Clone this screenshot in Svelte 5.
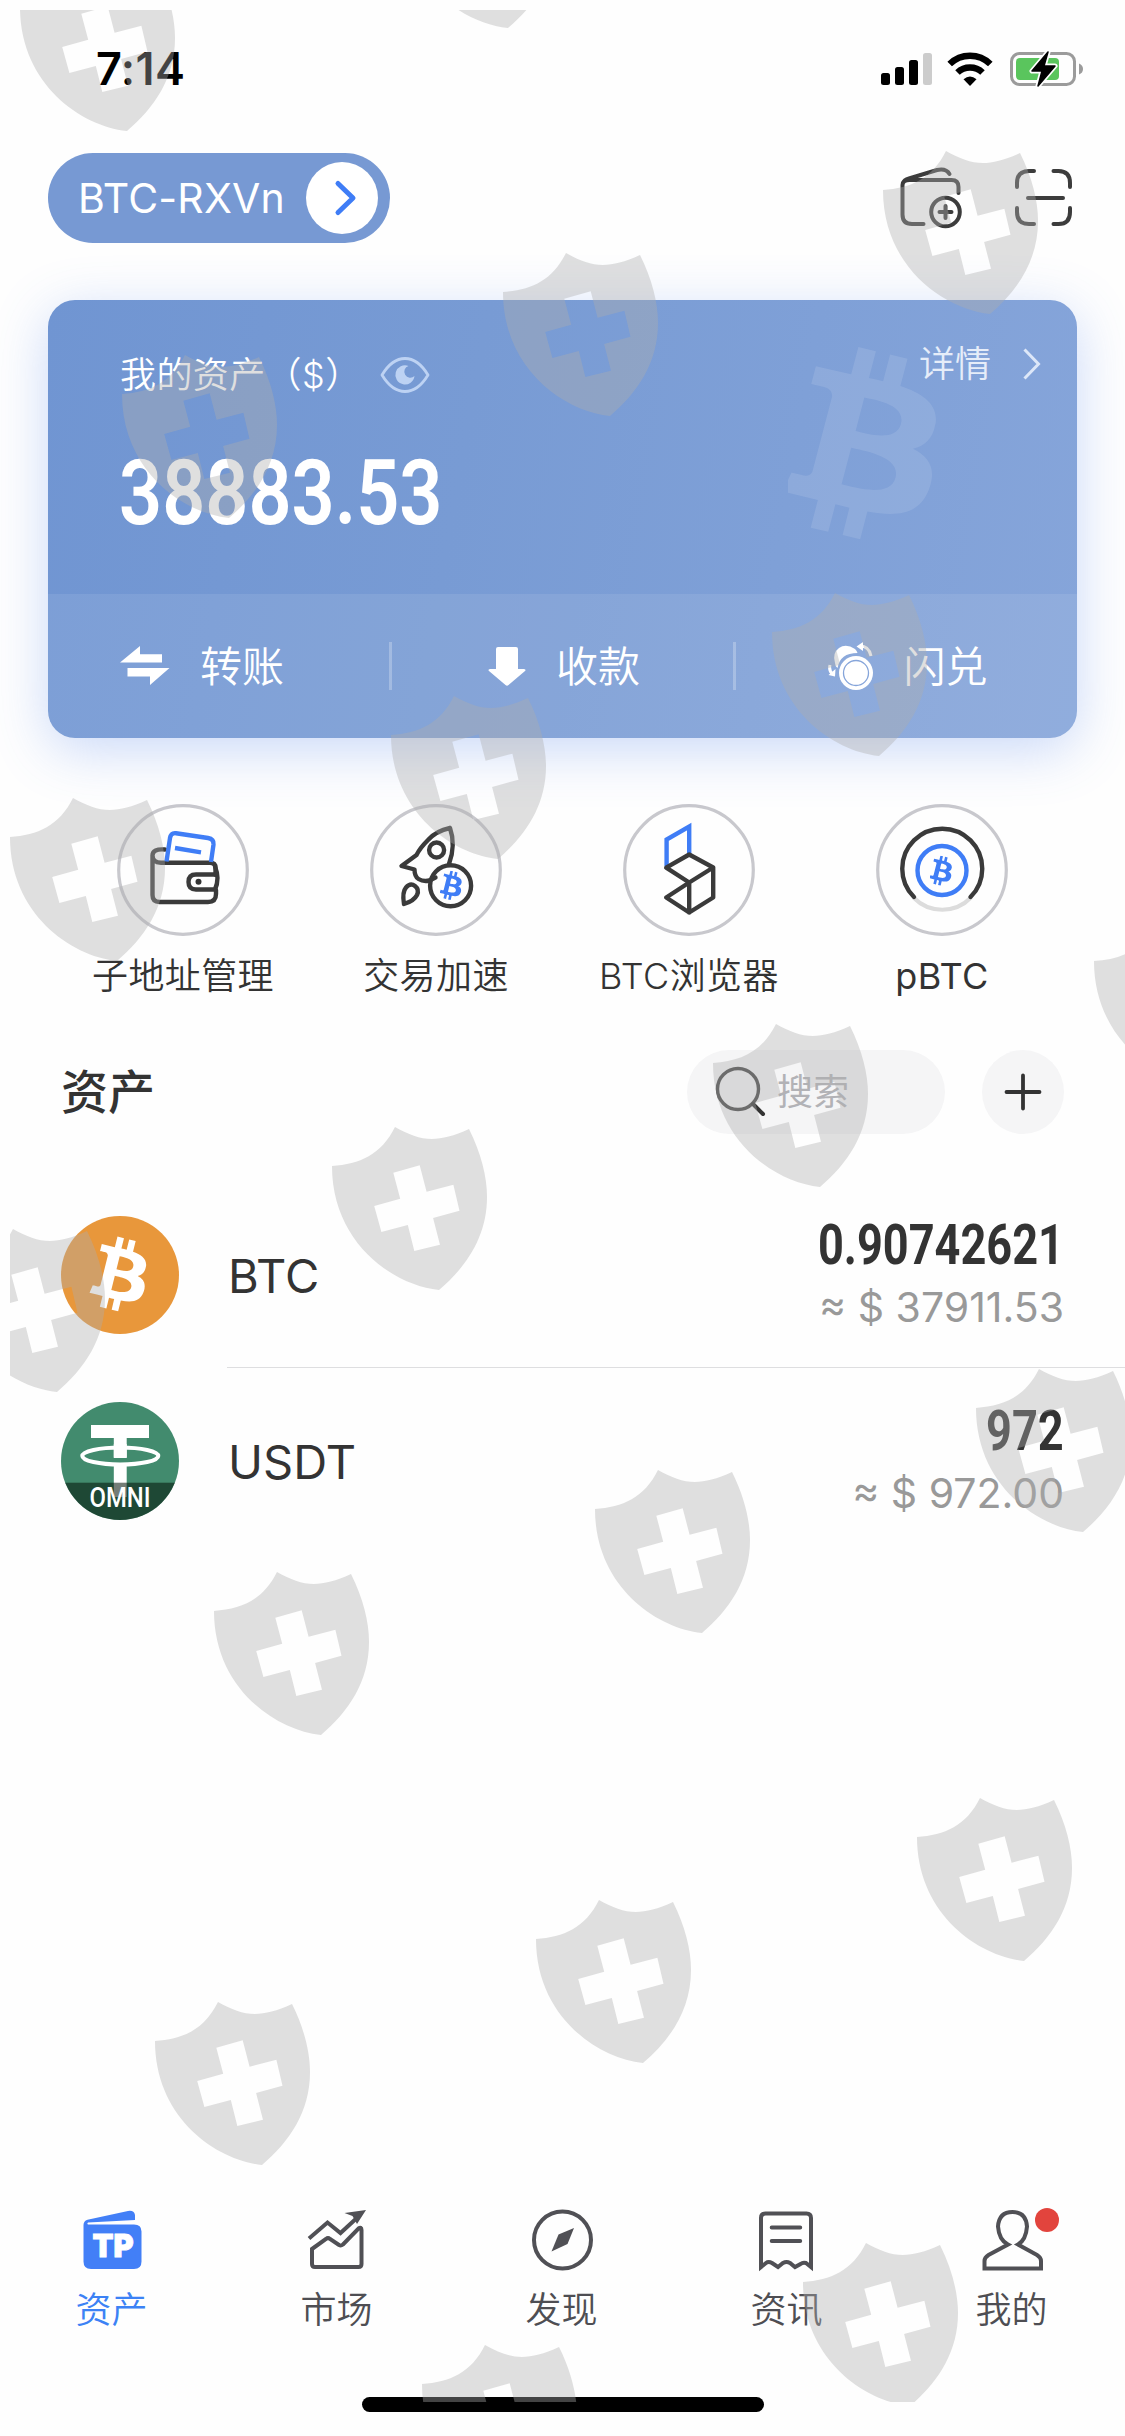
<script lang="ts">
	type Asset = { symbol: string; amount: string; value: string };

	const assets: Asset[] = [
		{ symbol: 'BTC', amount: '0.90742621', value: '37911.53' },
		{ symbol: 'USDT', amount: '972', value: '972.00' }
	];

	const shortcuts = [
		{ id: 'wallet', label: '子地址管理' },
		{ id: 'rocket', label: '交易加速' },
		{ id: 'explorer', label: 'BTC浏览器' },
		{ id: 'pbtc', label: 'pBTC' }
	];

	const tabs = [
		{ id: 'assets', label: '资产' },
		{ id: 'market', label: '市场' },
		{ id: 'discover', label: '发现' },
		{ id: 'news', label: '资讯' },
		{ id: 'me', label: '我的' }
	];

	let activeTab = $state('assets');

	const shields = [
		[20, -32], [401, -135], [883, 151], [503, 253], [122, 355], [772, 593],
		[391, 696], [10, 798], [1094, 922], [713, 1024], [332, 1127], [-50, 1229],
		[976, 1369], [595, 1470], [214, 1572], [917, 1798], [536, 1900], [155, 2002],
		[803, 2243], [422, 2345]
	];

	const bitcoin =
		'M17.288 10.291c.24-1.59-.974-2.45-2.64-3.03l.54-2.153-1.315-.33-.525 2.107c-.345-.087-.705-.167-1.064-.25l.526-2.127-1.32-.33-.54 2.165c-.285-.067-.565-.132-.84-.2l-1.815-.45-.35 1.407s.975.225.955.236c.535.136.63.486.615.766l-1.477 5.92c-.075.166-.24.406-.614.314.015.02-.96-.24-.96-.24l-.66 1.51 1.71.426.93.242-.54 2.19 1.32.327.54-2.17c.36.1.705.19 1.05.273l-.51 2.154 1.32.33.545-2.19c2.24.427 3.93.257 4.64-1.774.57-1.637-.03-2.58-1.217-3.196.854-.193 1.5-.76 1.68-1.93h.01zm-3.01 4.22c-.404 1.64-3.157.75-4.05.53l.72-2.9c.896.23 3.757.67 3.33 2.37zm.41-4.24c-.37 1.49-2.662.735-3.405.55l.654-2.64c.744.18 3.137.524 2.75 2.084v.006z';
</script>

<div class="screen">
	<div class="statusbar">
		<span class="time">7:14</span>
		<div class="status-icons">
			<svg width="52" height="36" viewBox="0 0 52 36">
				<rect x="1" y="22" width="9" height="12" rx="2.5" />
				<rect x="15" y="16" width="9" height="18" rx="2.5" />
				<rect x="29" y="9" width="9" height="25" rx="2.5" />
				<rect x="43" y="2" width="9" height="32" rx="2.5" fill="#ccc" />
			</svg>
			<svg width="46" height="36" viewBox="0 0 46 36">
				<path d="M23 35l-6.500-6.800q6.500-5.200 13 0z" />
				<path d="M10.500 21.500a18 18 0 0 1 25 0" fill="none" stroke="#000" stroke-width="6.500" />
				<path d="M2.700 13a29 29 0 0 1 40.600 0" fill="none" stroke="#000" stroke-width="6.500" />
			</svg>
			<svg width="76" height="38" viewBox="0 0 76 38">
				<rect x="3.500" y="3.500" width="63" height="31" rx="8" fill="none" stroke="#9b9b9b" stroke-width="3" />
				<path d="M71 13.500q4 1.500 4 5.500t-4 5.500z" fill="#9b9b9b" />
				<rect x="8" y="8" width="43" height="22" rx="4" fill="#5ac55d" />
				<path d="M40 2L24 21h10l-4 15 17-20H36z" stroke="#fff" stroke-width="5" stroke-linejoin="round" />
				<path d="M40 2L24 21h10l-4 15 17-20H36z" stroke="#000" stroke-width="1.500" stroke-linejoin="round" />
			</svg>
		</div>
	</div>

	<header>
		<button class="account">
			<span>BTC-RXVn</span>
			<i>
				<svg width="72" height="72" viewBox="0 0 72 72">
					<path d="M32 21.500L47 36 32 50.500" fill="none" stroke="#3f7df6" stroke-width="5" stroke-linecap="round" stroke-linejoin="round" />
				</svg>
			</i>
		</button>
		<div class="tools">
			<svg width="64" height="66" viewBox="0 0 64 66">
				<path d="M24.500 59H13q-9.500 0-9.500-9.500V20q0-5 7-5h42q7 0 7 7v6M4 18q1-3 6-4.500L38 5q9-2 12.500 4" />
				<circle cx="46.500" cy="47" r="14.300" />
				<path d="M46.500 41v12M40.500 47h12" />
			</svg>
			<svg class="scan" width="62" height="62" viewBox="0 0 62 62">
				<path d="M4 20v-4Q4 4 16 4h5M40.500 4h5Q57 4 57 16v4M57 41v4q0 12-11.500 12h-5M21 57h-5Q4 57 4 45v-4M15 31h35" />
			</svg>
		</div>
	</header>

	<section class="card">
		<svg class="card-mark" width="149" height="196" viewBox="6.200 4.100 11.200 15.500" preserveAspectRatio="none">
			<path d={bitcoin} />
		</svg>
		<div class="card-top">
			<div class="card-title">
				<span>我的资产（$）</span>
				<svg width="50" height="38" viewBox="0 0 50 38" fill="none">
					<path d="M2 19Q12 2.500 25 2.500T48 19Q38 35.500 25 35.500T2 19z" stroke="#bdd2f3" stroke-width="2.800" stroke-linejoin="round" />
					<path d="M28.500 10A9.600 9.600 0 1 0 34.500 20 6 6 0 1 1 28.500 10z" fill="#bdd2f3" />
				</svg>
			</div>
			<div class="details">
				<span>详情</span>
				<svg width="20" height="34" viewBox="0 0 20 34">
					<path d="M2.500 2.500L16.500 17 2.500 31.500" fill="none" stroke="#dde7f8" stroke-width="3" />
				</svg>
			</div>
		</div>
		<div class="balance"><span>38883.53</span></div>
		<div class="actions">
			<button>
				<svg width="50" height="40" viewBox="0 0 50 40">
					<path d="M0 16.500L20 0v8.300h22v8.200zM7.500 22h42L30 39v-8.500H7.500z" />
				</svg>
				<span>转账</span>
			</button>
			<button>
				<svg width="40" height="40" viewBox="0 0 40 40">
					<path d="M9 3q0-2 2-2h18q2 0 2 2v20h6q2.500.5 1 2L21.500 39q-1.500 1.300-3 0L2 25q-1.500-1.500 1-2h6z" />
				</svg>
				<span>收款</span>
			</button>
			<button>
				<svg width="47" height="50" viewBox="0 0 47 50">
					<path d="M8 22Q5 12 12 7t16 1q2 2 2.500 4Q13 12 10.500 27 8 25 8 22z" />
					<path d="M33 5q9 0 11 10" fill="none" stroke="#fff" stroke-width="3" />
					<path d="M29.500 5.500L36 1v9zM8 35.500L1.500 34 8.500 28z" />
					<path d="M3 24q-1.500 6 3 9" fill="none" stroke="#fff" stroke-width="3" />
					<circle cx="29" cy="32" r="17" />
					<circle cx="29" cy="32" r="12.500" fill="none" stroke="#86a5da" stroke-width="1.300" />
				</svg>
				<span>闪兑</span>
			</button>
		</div>
	</section>

	<nav class="shortcuts">
		{#each shortcuts as item (item.id)}
			<div class="shortcut">
				<svg width="132" height="132" viewBox="0 0 132 132">
					<circle cx="66" cy="66" r="64.300" stroke="#c8c8cd" stroke-width="3.200" />
					{#if item.id === 'wallet'}
						<g class="dark">
							<path d="M48 45.500q-12.500-1-12.500 6T44 58.700H93q5.500 0 5.500 5v7M35.500 51v40q0 7 7 7H91q8 0 8-8v-4" />
							<path d="M98 70.500H79q-7.500 0-7.500 7.500t7.500 7.500h19q5-11 0-23" />
						</g>
						<circle cx="81.500" cy="77.800" r="3" fill="#333" />
						<path class="blue" d="M49.500 57.500L53 34q1-5.500 6-4.800L91 34q6 1 5.500 6.500L94 58M58 44l26 4.300" />
					{:else if item.id === 'rocket'}
						<g class="dark">
							<path d="M80 24Q66 27 58 36q-8 8-11.500 15L31.500 62l13 3.500q0 7 4 9.500 5 3 11 1.500l6-3M80 24q6 17-1 36" />
							<circle cx="66.600" cy="46" r="7.500" />
							<path d="M34 100q-2-12 2-16.500 4.500-5 9-1.500t2 9Q44 97 34 100z" />
							<circle cx="80.600" cy="81.700" r="20.500" />
						</g>
						<svg x="70" y="66.500" width="22" height="30" viewBox="6.200 4.100 11.200 15.500">
							<path d={bitcoin} fill="#3f7df6" />
						</svg>
					{:else if item.id === 'explorer'}
						<path class="blue" d="M43.600 62V35.500l22.600-13V50" />
						<path class="dark" d="M66.200 50.500l24 13v30l-24 15-23-15 23-15-23-14.800zM90.200 63.500l-24 15v30" />
					{:else}
						<path d="M37.500 93.500a40 40 0 0 0 57.500 0" stroke="#dcdcdc" stroke-width="4" />
						<path class="dark" d="M38 93a40 40 0 1 1 56.500 0" />
						<circle class="blue" cx="66" cy="66.500" r="24.500" />
						<svg x="54" y="51.500" width="22" height="30.500" viewBox="6.200 4.100 11.200 15.500">
							<path d={bitcoin} fill="#3f7df6" />
						</svg>
					{/if}
				</svg>
				<span class:latin={item.id === 'pbtc'}>{item.label}</span>
			</div>
		{/each}
	</nav>

	<div class="list-head">
		<h2>资产</h2>
		<div class="search">
			<svg width="52" height="52" viewBox="0 0 52 52">
				<circle cx="23" cy="23" r="20.500" fill="none" stroke="#444" stroke-width="3.400" />
				<path d="M38 38l10 10" stroke="#333" stroke-width="4" stroke-linecap="round" />
			</svg>
			<span>搜索</span>
		</div>
		<button class="add" aria-label="add">
			<svg width="38" height="38" viewBox="0 0 38 38">
				<path d="M19 2.500v33M2.500 19h33" stroke="#333" stroke-width="3.800" stroke-linecap="round" />
			</svg>
		</button>
	</div>

	<div class="assets">
		{#each assets as asset (asset.symbol)}
			<div class="asset">
				<svg width="118" height="118" viewBox="0 0 118 118">
					{#if asset.symbol === 'BTC'}
						<circle cx="59" cy="59" r="59" fill="#e8973b" />
						<path d={bitcoin} fill="#fff" transform="scale(4.917)" />
					{:else}
						<clipPath id="coin"><circle cx="59" cy="59" r="59" /></clipPath>
						<g clip-path="url(#coin)">
							<rect width="118" height="118" fill="#428b6e" />
							<path d="M30 23h58v13H65.700v20H52.800V36H30zM52.800 62h12.900v33H52.800z" fill="#fff" />
							<ellipse cx="59.300" cy="54" rx="38" ry="8.500" fill="none" stroke="#fff" stroke-width="4" />
							<path d="M52.800 42h12.900v13.500H52.800z" fill="#fff" />
							<rect y="80.700" width="118" height="38" fill="#021208" opacity=".55" />
							<text x="59" y="105" textLength="61" lengthAdjust="spacingAndGlyphs">OMNI</text>
						</g>
					{/if}
				</svg>
				<div class="asset-body">
					<span class="symbol">{asset.symbol}</span>
					<div class="figures">
						<span class="amount">{asset.amount}</span>
						<span class="value">≈ $ {asset.value}</span>
					</div>
				</div>
			</div>
		{/each}
	</div>

	<footer>
		<div class="tabs">
			{#each tabs as tab (tab.id)}
				<button class="tab" class:active={activeTab === tab.id} onclick={() => (activeTab = tab.id)}>
					<svg width="62" height="64" viewBox="0 0 62 64">
						{#if tab.id === 'assets'}
							<path class="solid" d="M1.500 17q0-4 4-5.200L46 3q6-1 7 4v5L6 14.500q-1.500 1.300 0 2H52q7.500 0 7.500 7v30q0 7.500-7.500 7.500H9q-7.500 0-7.500-7.500z" />
							<text x="31" y="49" text-anchor="middle" textLength="41" lengthAdjust="spacingAndGlyphs">TP</text>
						{:else if tab.id === 'market'}
							<path d="M2 30.500L20.500 14.500l13 10.500L52 8" />
							<path class="solid" d="M59 2L37.500 5l8 3 4.500 8z" />
							<path d="M5 41L19 31q2-1.700 4 0l9 6q2 1 4-.5l15.500-16q3-2 3 1.500v34q0 3-3 3H8q-3 0-3-3z" />
						{:else if tab.id === 'discover'}
							<circle cx="30.500" cy="32" r="28.500" />
							<path class="solid" d="M42 20L35.500 36 19.500 43.500 26.500 26.500z" />
						{:else if tab.id === 'news'}
							<path d="M4 59V10q0-4.500 4.500-4.500h41Q54 5.500 54 10v49l-5-4q-3-1-5.500 1L38 59l-5-4q-3.500-2-7 0l-5 4-6-4q-3.500-2-6 0zM14.700 19.500h28.500M14.700 33h28.500" stroke-linecap="round" />
						{:else}
							<path d="M26 36.500Q17 32 16 18.500 17 4 30.500 4t14.500 14.500Q44 32 36 36.500L55 47q4 2.500 4 6v7.500H2.500V53q0-3.500 4-6z" />
						{/if}
					</svg>
					<span>{tab.label}</span>
					{#if tab.id === 'me'}<b class="dot"></b>{/if}
				</button>
			{/each}
		</div>
		<div class="home-indicator"></div>
	</footer>

	<svg class="watermark" width="1115" height="2392" viewBox="10 10 1115 2392">
		{#each shields as [x, y]}
			<path
				transform="translate({x} {y})"
				d="M0 39C28 37 49 28 63 0 88 14 104 17 137 2 149 26 155 50 155 70 155 110 134 140 107 163 60 158 0 115 0 39zM61.300 45.700L68.200 71.700 42.200 79 49.400 105 75.800 98 82.300 124 108 117.700 101.100 91 127.500 83.700 121.400 57.700 94.600 64.700 87.700 38.300z"
			/>
		{/each}
	</svg>
</div>

<style>
	:global(body) {
		margin: 0;
		background: #fefefe;
	}

	.screen {
		position: relative;
		display: flex;
		flex-direction: column;
		width: 1125px;
		height: 2436px;
		overflow: hidden;
		background: #fefefe;
		color: #333;
		font-family: Inter, 'Noto Sans CJK SC', sans-serif;
		font-size: 36px;
		line-height: 44px;
	}

	svg {
		display: block;
		flex: none;
	}

	button {
		border: 0;
		padding: 0;
		background: none;
		color: inherit;
		font: inherit;
	}

	.statusbar {
		display: flex;
		justify-content: space-between;
		align-items: center;
		height: 138px;
		padding: 0 41px 0 96px;
		box-sizing: border-box;
	}

	.time {
		font-size: 45px;
		font-weight: 600;
		letter-spacing: 0.4px;
		color: #000;
	}

	.status-icons {
		display: flex;
		align-items: center;
		gap: 15px;
	}

	header {
		display: flex;
		justify-content: space-between;
		align-items: center;
		height: 90px;
		margin-top: 15px;
		padding: 0 50px 0 48px;
	}

	.account {
		display: flex;
		align-items: center;
		justify-content: space-between;
		box-sizing: border-box;
		width: 342px;
		height: 90px;
		padding: 0 12px 0 30px;
		border-radius: 45px;
		background: #7799d3;
		color: #fff;
		font-size: 41px;
		letter-spacing: 0.2px;
	}

	.account i {
		border-radius: 50%;
		background: #fff;
	}

	.tools {
		display: flex;
		align-items: center;
		gap: 50px;
		fill: none;
		stroke: #3c3c3c;
		stroke-width: 4;
		stroke-linecap: round;
	}

	.card {
		position: relative;
		height: 438px;
		margin: 57px 48px 0;
		border-radius: 27px;
		background: linear-gradient(100deg, #7095d2, #789bd4 40%, #86a5da);
		box-shadow: 0 12px 54px rgba(80, 130, 235, 0.3);
		color: #fff;
	}

	.card-mark {
		position: absolute;
		left: 740px;
		top: 46px;
		fill: rgba(255, 255, 255, 0.11);
	}

	.card-top {
		display: flex;
		justify-content: space-between;
		height: 112px;
		padding: 0 35px 0 72px;
	}

	.card-title {
		display: flex;
		align-items: center;
		gap: 18px;
		height: 44px;
		margin-top: 53px;
		letter-spacing: 0.4px;
		font-weight: 350;
	}

	.details {
		display: flex;
		align-items: center;
		gap: 31px;
		height: 44px;
		margin-top: 42px;
		color: #e6edf9;
		font-weight: 350;
	}

	.balance {
		height: 182px;
		padding-left: 71px;
		font-family: Roboto, sans-serif;
		font-size: 91px;
		font-weight: 600;
		line-height: 162px;
	}

	.balance span {
		display: inline-block;
		transform: scaleX(0.83);
		transform-origin: left;
	}

	.actions {
		display: grid;
		grid-template-columns: 341px 344px 344px;
		height: 144px;
		border-radius: 0 0 27px 27px;
		background: rgba(255, 255, 255, 0.09);
		fill: #fff;
		font-size: 42px;
		font-weight: 350;
	}

	.actions button {
		display: flex;
		align-items: center;
		justify-content: center;
		gap: 29px;
		padding-left: 5px;
	}

	.actions button:first-child {
		justify-content: flex-start;
		padding-left: 72px;
		gap: 30px;
	}

	.actions button + button {
		background: linear-gradient(rgba(255, 255, 255, 0.25) 0 0) left center / 3px 48px no-repeat;
	}

	.actions span {
		padding-top: 2px;
	}

	.shortcuts {
		display: grid;
		grid-template-columns: repeat(4, 253px);
		justify-content: center;
		margin-top: 66px;
		color: #333;
	}

	.shortcut {
		display: flex;
		flex-direction: column;
		align-items: center;
		gap: 18px;
		fill: none;
		font-weight: 350;
		letter-spacing: 0.4px;
	}

	.latin {
		font-weight: 400;
	}

	.dark {
		stroke: #3a3a3a;
		stroke-width: 4.4;
		stroke-linejoin: round;
		stroke-linecap: round;
	}

	.blue {
		stroke: #3f7df6;
		stroke-width: 4.4;
	}

	.list-head {
		display: flex;
		align-items: center;
		height: 84px;
		margin-top: 52px;
		padding: 0 61px;
	}

	h2 {
		flex: 1;
		margin: 0;
		font-size: 47px;
		font-weight: 500;
	}

	.search {
		display: flex;
		align-items: center;
		gap: 10px;
		box-sizing: border-box;
		width: 258px;
		height: 84px;
		padding-left: 28px;
		border-radius: 42px;
		background: #f5f5f6;
		color: #b2b2b6;
	}

	.add {
		display: flex;
		align-items: center;
		justify-content: center;
		width: 82px;
		height: 84px;
		margin-left: 37px;
		border-radius: 50%;
		background: #f5f5f6;
	}

	.assets {
		margin-top: 48px;
	}

	.asset {
		display: flex;
		align-items: center;
		height: 186px;
		padding-left: 61px;
	}

	.asset text {
		fill: #fff;
		font: 500 28px Roboto, sans-serif;
		text-anchor: middle;
	}

	.asset-body {
		display: flex;
		align-items: center;
		justify-content: space-between;
		flex: 1;
		box-sizing: border-box;
		height: 186px;
		margin-left: 48px;
		padding: 2px 61px 0 1px;
		border-bottom: 1px solid #dedee0;
	}

	.asset:last-child .asset-body {
		border-color: transparent;
	}

	.symbol {
		font-size: 47px;
	}

	.figures {
		display: flex;
		flex-direction: column;
		align-items: flex-end;
		gap: 10px;
	}

	.amount {
		font-family: Roboto, sans-serif;
		font-size: 55px;
		font-weight: 700;
		line-height: 52px;
		transform: scaleX(0.82);
		transform-origin: right;
	}

	.value {
		color: #999;
		font-size: 41px;
		line-height: 52px;
	}

	footer {
		margin-top: auto;
	}

	.tabs {
		display: grid;
		grid-template-columns: repeat(5, 225px);
		color: #4e4e53;
	}

	.tab {
		position: relative;
		display: flex;
		flex-direction: column;
		align-items: center;
		gap: 16px;
		fill: none;
		stroke: #505055;
		stroke-width: 4;
		font-weight: 350;
	}

	.tab span {
		position: relative;
		left: -1px;
	}

	.solid {
		fill: #505055;
		stroke: none;
	}

	.active {
		color: #3c82f5;
	}

	.active .solid {
		fill: #427ff7;
	}

	.tab text {
		fill: #fff;
		stroke: #fff;
		stroke-width: 1;
		font: 900 32px Inter, sans-serif;
	}

	.dot {
		position: absolute;
		left: 135px;
		top: 0;
		width: 24px;
		height: 24px;
		border-radius: 50%;
		background: #e2443d;
	}

	.home-indicator {
		width: 402px;
		height: 15px;
		margin: 65px auto 24px;
		border-radius: 8px;
		background: #000;
	}

	.watermark {
		position: absolute;
		left: 10px;
		top: 10px;
		fill: #aeaeae;
		opacity: 0.385;
		pointer-events: none;
	}
</style>
